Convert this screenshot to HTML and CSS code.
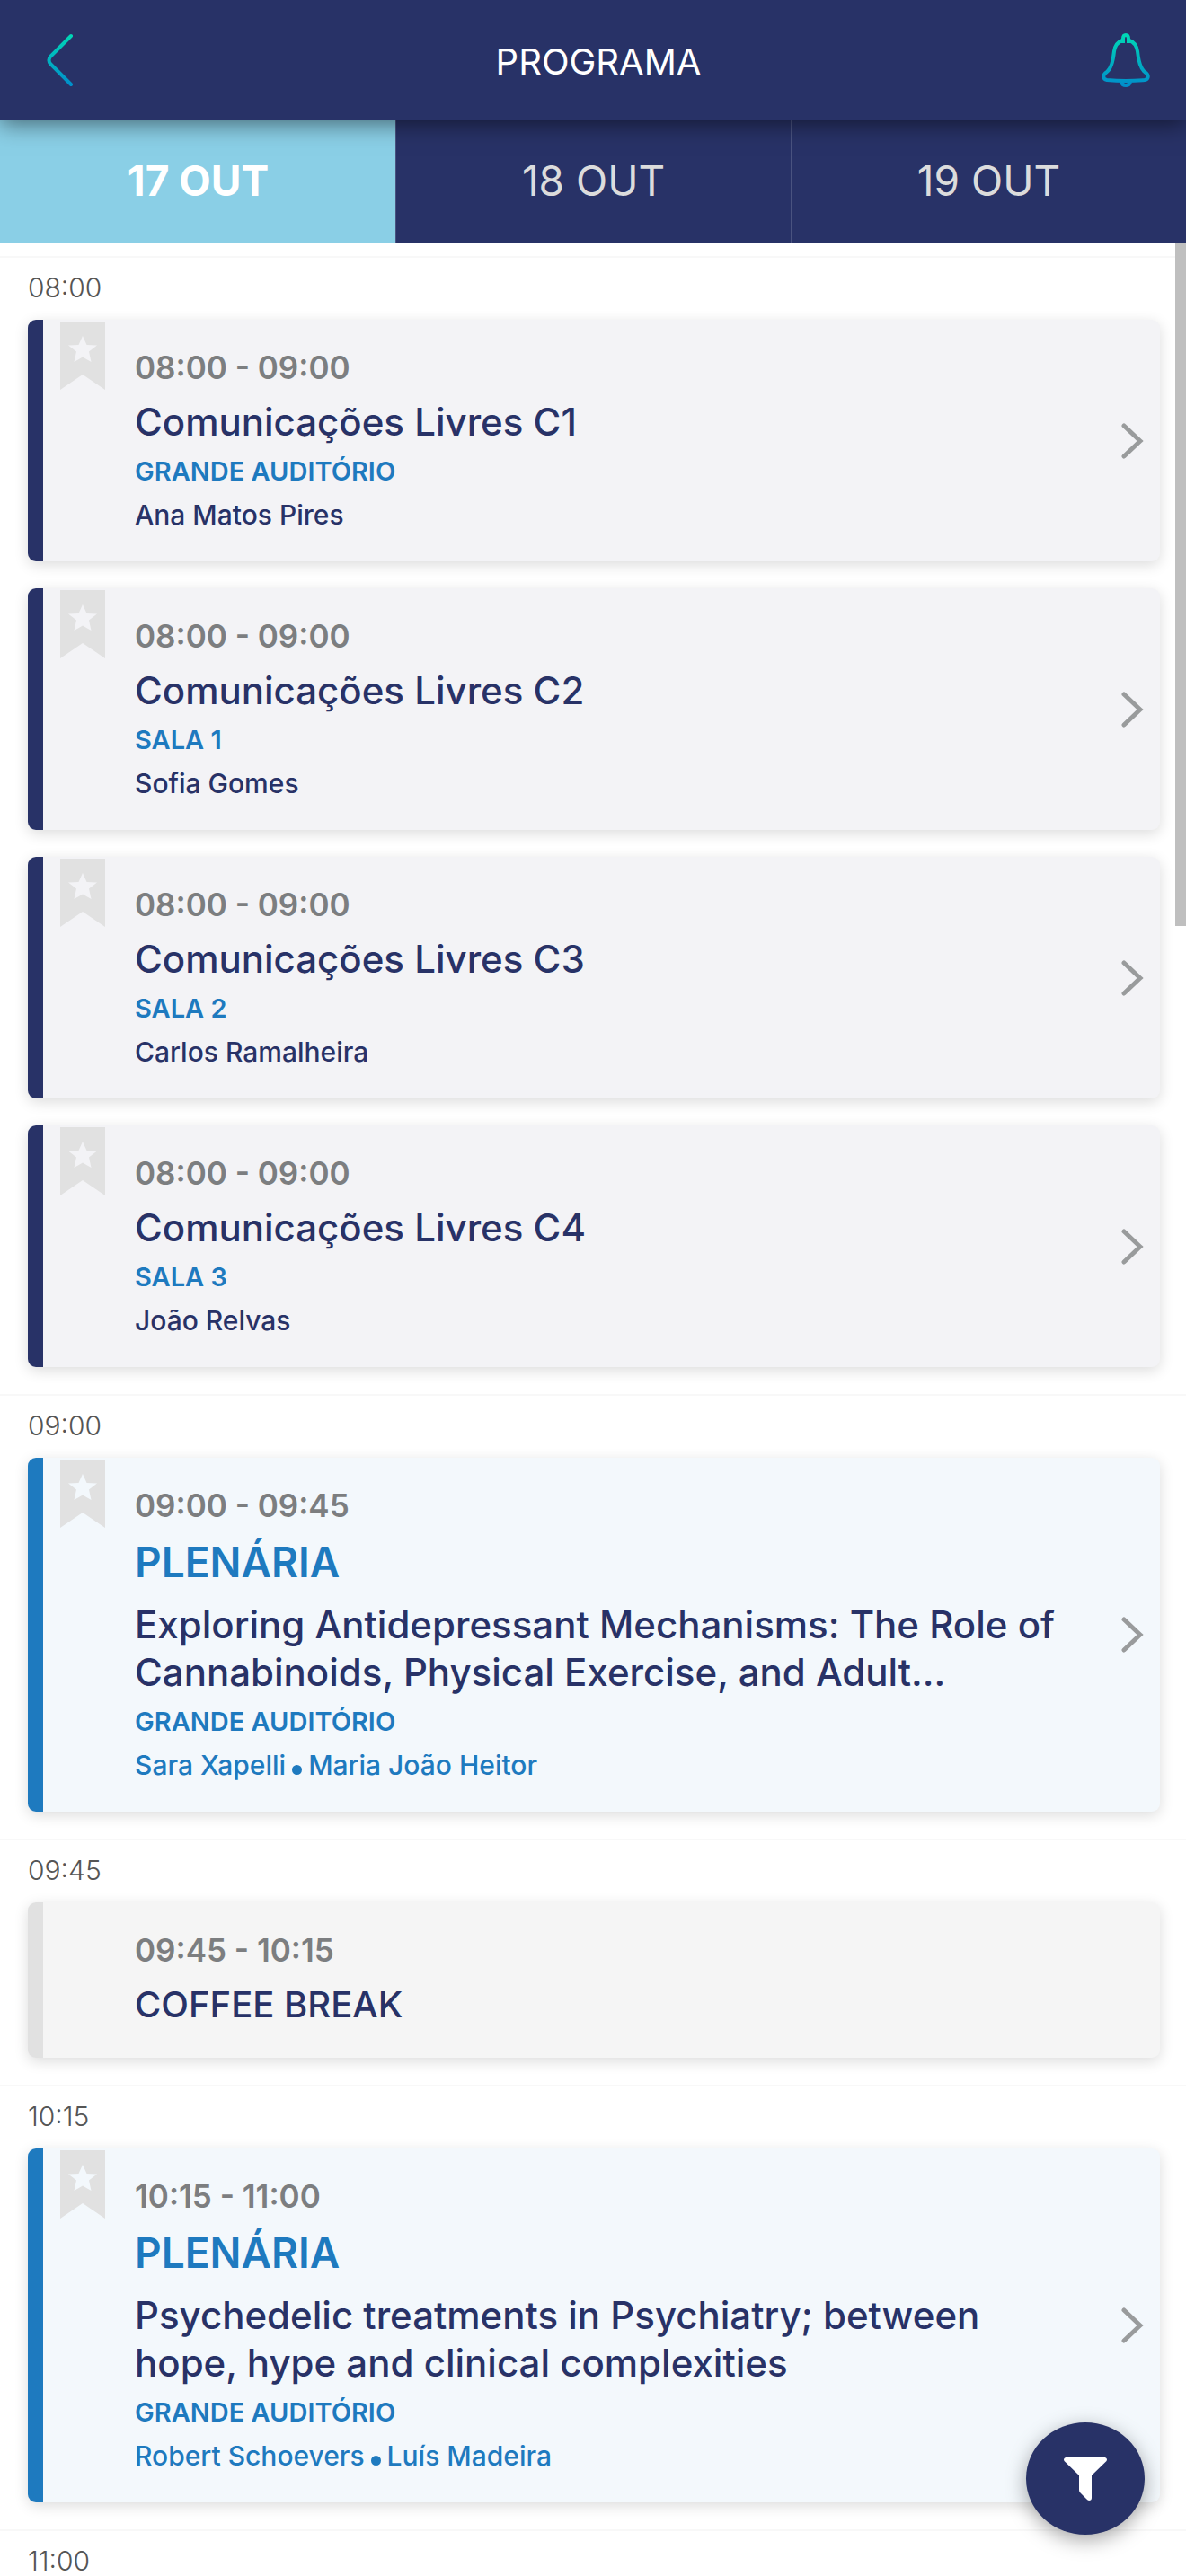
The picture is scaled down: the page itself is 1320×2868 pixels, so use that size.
FILE: index.html
```html
<!DOCTYPE html>
<html lang="pt">
<head>
<meta charset="utf-8">
<meta name="viewport" content="width=device-width, initial-scale=1">
<title>Programa</title>
<link rel="stylesheet" href="styles.css">
</head>
<body>
<svg class="defs" aria-hidden="true">
  <defs>
    <linearGradient id="teal" gradientUnits="userSpaceOnUse" x1="0" y1="0" x2="0" y2="60">
      <stop offset="0" stop-color="#00d9b5"/>
      <stop offset="1" stop-color="#008ccb"/>
    </linearGradient>
    <symbol id="bookmark" viewBox="0 0 50 76">
      <path fill="#e1e1e1" fill-rule="evenodd" d="M0 0H50V76L25 59L0 76ZM25 16L20.500 26L9 26.500L18 33.500L15.500 45L25 39.500L34.500 45L32 33.500L41 26.500L29.500 26Z"/>
    </symbol>
    <symbol id="chevron" viewBox="0 0 26 42">
      <path fill="none" stroke="#999b9c" stroke-width="5" stroke-linecap="round" d="M3 4L21 21L3 38"/>
    </symbol>
  </defs>
</svg>
<div class="app">
  <header class="topbar">
    <button class="icon-button" type="button" aria-label="Voltar">
      <svg width="30" height="60" viewBox="0 0 30 60"><path fill="none" stroke="url(#teal)" stroke-width="4" stroke-linecap="round" d="M27 3L4 26Q1 30 4 34L27 57"/></svg>
    </button>
    <h1 class="topbar-title">PROGRAMA</h1>
    <button class="icon-button" type="button" aria-label="Notificações">
      <svg width="54" height="60" viewBox="0 0 54 60"><g fill="none" stroke="url(#teal)" stroke-width="4" stroke-linejoin="round"><path d="M24 11V6Q24 2 27 2Q30 2 30 6V11"/><path d="M23 8C17 10 15 14 14 20C13 30 11 39 6 43C1 46 1 51 6 52Q27 54 48 52C53 51 53 46 48 43C43 39 41 30 40 20C39 14 37 10 31 8"/><path d="M22 54Q23 58 27 58Q31 58 32 54"/></g></svg>
    </button>
  </header>
  <nav class="tabs" aria-label="Dias">
    <button class="tab tab-active" type="button">17 OUT</button>
    <button class="tab" type="button">18 OUT</button>
    <button class="tab" type="button">19 OUT</button>
  </nav>
  <div class="viewport">
    <main class="schedule">
      <section class="slot">
        <h2 class="slot-time">08:00</h2>
        <div class="cards">
          <article class="card">
            <button class="bookmark" type="button" aria-label="Guardar"><svg width="50" height="76"><use href="#bookmark"/></svg></button>
            <a class="session" href="#c1">
              <p class="time">08:00 - 09:00</p>
              <h3 class="title">Comunicações Livres C1</h3>
              <p class="room">GRANDE AUDITÓRIO</p>
              <p class="people">Ana Matos Pires</p>
            </a>
            <svg class="chevron" width="26" height="42"><use href="#chevron"/></svg>
          </article>
          <article class="card">
            <button class="bookmark" type="button" aria-label="Guardar"><svg width="50" height="76"><use href="#bookmark"/></svg></button>
            <a class="session" href="#c2">
              <p class="time">08:00 - 09:00</p>
              <h3 class="title">Comunicações Livres C2</h3>
              <p class="room">SALA 1</p>
              <p class="people">Sofia Gomes</p>
            </a>
            <svg class="chevron" width="26" height="42"><use href="#chevron"/></svg>
          </article>
          <article class="card">
            <button class="bookmark" type="button" aria-label="Guardar"><svg width="50" height="76"><use href="#bookmark"/></svg></button>
            <a class="session" href="#c3">
              <p class="time">08:00 - 09:00</p>
              <h3 class="title">Comunicações Livres C3</h3>
              <p class="room">SALA 2</p>
              <p class="people">Carlos Ramalheira</p>
            </a>
            <svg class="chevron" width="26" height="42"><use href="#chevron"/></svg>
          </article>
          <article class="card">
            <button class="bookmark" type="button" aria-label="Guardar"><svg width="50" height="76"><use href="#bookmark"/></svg></button>
            <a class="session" href="#c4">
              <p class="time">08:00 - 09:00</p>
              <h3 class="title">Comunicações Livres C4</h3>
              <p class="room">SALA 3</p>
              <p class="people">João Relvas</p>
            </a>
            <svg class="chevron" width="26" height="42"><use href="#chevron"/></svg>
          </article>
        </div>
      </section>
      <section class="slot">
        <h2 class="slot-time">09:00</h2>
        <div class="cards">
          <article class="card card-plenary">
            <button class="bookmark" type="button" aria-label="Guardar"><svg width="50" height="76"><use href="#bookmark"/></svg></button>
            <a class="session" href="#plenaria-1">
              <p class="time">09:00 - 09:45</p>
              <p class="kind">PLENÁRIA</p>
              <h3 class="title">Exploring Antidepressant Mechanisms: The Role of Cannabinoids, Physical Exercise, and Adult...</h3>
              <p class="room">GRANDE AUDITÓRIO</p>
              <p class="people">Sara Xapelli<span class="dot"></span>Maria João Heitor</p>
            </a>
            <svg class="chevron" width="26" height="42"><use href="#chevron"/></svg>
          </article>
        </div>
      </section>
      <section class="slot">
        <h2 class="slot-time">09:45</h2>
        <div class="cards">
          <article class="card card-break">
            <div class="session">
              <p class="time">09:45 - 10:15</p>
              <h3 class="title">COFFEE BREAK</h3>
            </div>
          </article>
        </div>
      </section>
      <section class="slot">
        <h2 class="slot-time">10:15</h2>
        <div class="cards">
          <article class="card card-plenary">
            <button class="bookmark" type="button" aria-label="Guardar"><svg width="50" height="76"><use href="#bookmark"/></svg></button>
            <a class="session" href="#plenaria-2">
              <p class="time">10:15 - 11:00</p>
              <p class="kind">PLENÁRIA</p>
              <h3 class="title">Psychedelic treatments in Psychiatry; between hope, hype and clinical complexities</h3>
              <p class="room">GRANDE AUDITÓRIO</p>
              <p class="people">Robert Schoevers<span class="dot"></span>Luís Madeira</p>
            </a>
            <svg class="chevron" width="26" height="42"><use href="#chevron"/></svg>
          </article>
        </div>
      </section>
      <section class="slot">
        <h2 class="slot-time">11:00</h2>
      </section>
    </main>
    <div class="scroll-thumb"></div>
  </div>
  <button class="filter" type="button" aria-label="Filtrar">
    <svg width="48" height="48" viewBox="0 0 48 48"><path fill="#fff" d="M2 0H46Q49 1 47.500 4L31 20V45Q31 48 28 48Q26 47.500 25 46L18 39Q17 38 17 36V20L.5 4Q-1 1 2 0Z"/></svg>
  </button>
</div>
</body>
</html>
```

FILE: styles.css
```css
:root {
  --navy: #283267;
  --blue: #1e7abf;
  --sky: #8acfe6;
}

* {
  box-sizing: border-box;
}

body {
  margin: 0;
  background: #fff;
  font-family: Inter, "Open Sans", sans-serif;
}

h1, h2, h3, p {
  margin: 0;
}

button {
  padding: 0;
  border: 0;
  background: none;
  font: inherit;
  cursor: pointer;
}

svg {
  display: block;
}

.defs {
  position: absolute;
  width: 0;
  height: 0;
}

.app {
  display: flex;
  flex-direction: column;
  height: 100vh;
}

.topbar {
  position: relative;
  z-index: 1;
  display: grid;
  grid-template-columns: 1fr auto 1fr;
  align-items: center;
  height: 134px;
  padding: 0 40px 0 52px;
  background: var(--navy);
  box-shadow: 0 4px 24px rgba(0, 0, 0, .5);
}

.icon-button {
  display: flex;
  justify-self: start;
}

.icon-button:last-child {
  justify-self: end;
}

.topbar-title {
  padding-top: 4px;
  color: #fff;
  font-size: 40px;
  line-height: 50px;
  font-weight: 400;
}

.tabs {
  display: grid;
  grid-template-columns: repeat(3, 1fr);
  height: 137px;
  background: var(--navy);
}

.tab {
  padding-bottom: 3px;
  border-left: 1px solid #4a5380;
  color: #dcdcdc;
  font-size: 46px;
  line-height: 58px;
  font-weight: 400;
}

.tab-active {
  border-left-color: var(--sky);
  background: var(--sky);
  color: #fff;
  font-weight: 700;
}

.viewport {
  position: relative;
  flex: 1;
  min-height: 0;
}

.schedule {
  height: 100%;
  padding-top: 14px;
  overflow-y: auto;
  scrollbar-width: none;
}

.scroll-thumb {
  position: absolute;
  top: 0;
  right: 0;
  width: 12px;
  height: 760px;
  background: #bfbfbf;
}

.slot {
  padding: 0 29px 30px 31px;
  border-top: 2px solid #f8f8f8;
}

.slot:last-child {
  padding-bottom: 0;
}

.slot-time {
  padding: 18px 0 21px;
  color: #555;
  font-size: 30px;
  line-height: 30px;
  font-weight: 300;
}

.cards {
  display: grid;
  gap: 30px;
}

.card {
  display: flex;
  border-left: 17px solid var(--navy);
  border-radius: 9px;
  background: #f3f3f6;
  box-shadow: 0 4px 16px rgba(0, 0, 0, .14);
}

.card-plenary {
  border-left-color: var(--blue);
  background: #f3f8fc;
}

.card-break {
  border-left-color: #e1e1e1;
  background: #f5f5f5;
}

.bookmark {
  align-self: flex-start;
  padding: 2px 0 0 19px;
}

.session {
  flex: 1;
  padding: 29px 60px 28px 33px;
  color: var(--navy);
  text-decoration: none;
}

.card-break .session {
  padding-left: 102px;
}

.time {
  color: #7c7e80;
  font-size: 35px;
  line-height: 48px;
  font-weight: 600;
}

.kind {
  padding-top: 8px;
  color: var(--blue);
  font-size: 46px;
  line-height: 62px;
  font-weight: 600;
}

.title {
  padding: 10px 0 5px;
  font-size: 42px;
  line-height: 53px;
  font-weight: 500;
}

.kind + .title {
  padding-top: 12px;
}

.card-break .title {
  font-size: 40px;
}

.room,
.people {
  line-height: 48px;
}

.room {
  color: var(--blue);
  font-size: 29px;
  font-weight: 600;
}

.people {
  font-size: 30px;
  font-weight: 500;
}

.card-plenary .people {
  color: var(--blue);
}

.dot {
  display: inline-block;
  width: 11px;
  height: 11px;
  margin: 0 7px;
  border-radius: 50%;
  background: currentColor;
}

.chevron {
  align-self: center;
  flex: none;
  margin-right: 17px;
}

.filter {
  position: fixed;
  right: 46px;
  bottom: 46px;
  display: grid;
  place-items: center;
  width: 132px;
  height: 125px;
  border-radius: 50%;
  background: var(--navy);
  box-shadow: 0 6px 22px rgba(0, 0, 0, .35);
}
```
